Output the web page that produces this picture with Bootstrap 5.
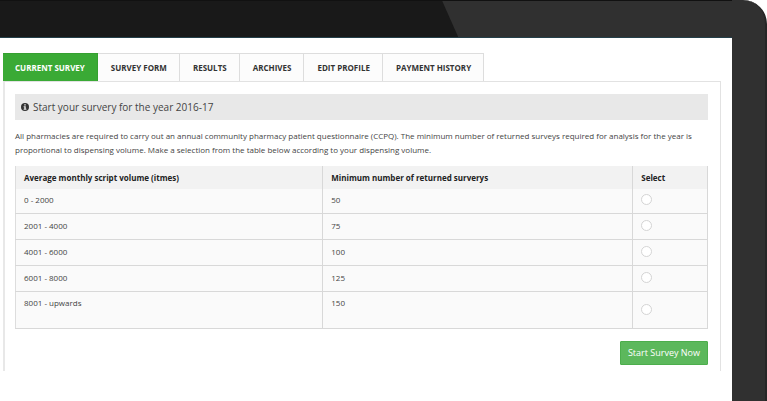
<!DOCTYPE html>
<html lang="en">
<head>
<meta charset="utf-8">
<meta name="viewport" content="width=device-width, initial-scale=1">
<title>Current Survey</title>
<link href="https://cdn.jsdelivr.net/npm/bootstrap@5.3.0/dist/css/bootstrap.min.css" rel="stylesheet">
<style>
body { font-family: "Open Sans", "Noto Sans", sans-serif; font-size: 8px; line-height: 14px; color: #444; background: #fff; }
.device { background: #303030; border-top-right-radius: 24px; border-right: 2px solid #262626; padding-right: 33px; overflow: hidden; }
.bezel { height: 38px; border-top: 1px solid #111; border-bottom: 1px solid #24404a; }
.bezel-shade { width: 62.6%; background: #191919; clip-path: polygon(0 0, calc(100% - 16px) 0, 100% 100%, 0 100%); }
.screen { padding: 15px 11px 32px 3px; }
.survey-tabs { --bs-nav-tabs-border-width: 1px; border-bottom: 0; }
.survey-tabs .nav-link { font-size: 8px; line-height: 14px; font-weight: 700; color: #333; background: #fcfcfc; border: 1px solid #ddd; border-width: 1px 1px 0 0; border-radius: 0; padding: 7px 12px 6px 13px; margin: 0; }
.survey-tabs .nav-link.active { color: #fff; background: #3aaa35; border-color: #35a030; padding-left: 12px; }
.panel { border: 1px solid #e2e2e2; border-left: 2px solid #e8e8e8; border-bottom: 0; padding: 12px 12px 6px 10px; }
.banner { background: #e8e8e8; font-size: 10px; line-height: 16px; padding: 5px 6px; margin-bottom: 9px; }
.intro { margin-bottom: 9px; }
.survey-table { --bs-table-bg: #fafafa; --bs-table-color: #444; border: 1px solid #ddd; border-top: 0; table-layout: fixed; margin-bottom: 12px; }
.survey-table th, .survey-table td { border: 1px solid #d8d8d8; border-width: 0 1px 1px 0; padding: 5px 8px 6px; height: 26px; line-height: 14px; }
.survey-table th { background: #f2f2f2; color: #222; border-bottom: 0; height: 23px; padding: 5px 8px 4px; }
.survey-table tbody tr:first-child td { height: 24px; padding-top: 4px; padding-bottom: 5px; }
.survey-table tbody tr:last-child td { height: 37px; padding-top: 4px; }
.survey-table tbody tr:last-child td:last-child { vertical-align: middle; }
.range-col { width: 44.4%; }
.number-col { width: 44.8%; }
.survey-table .form-check-input { display: block; width: 11px; height: 11px; margin: 1px 0 0; border: 1px solid #d4d4d4; }
.start-btn { --bs-btn-bg: #5cb85c; --bs-btn-border-color: #4cae4c; --bs-btn-color: #fff; --bs-btn-hover-bg: #449d44; --bs-btn-hover-color: #fff; font-size: 9px; line-height: 14px; padding: 4px 7px; border-radius: 1px; }
</style>
<script src="https://cdn.jsdelivr.net/npm/bootstrap@5.3.0/dist/js/bootstrap.bundle.min.js"></script>
</head>
<body>
<div class="device">
  <div class="bezel d-flex"><div class="bezel-shade"></div></div>
  <main class="screen bg-white">
    <nav aria-label="Survey sections">
      <div class="survey-tabs nav nav-tabs text-uppercase">
        <a class="nav-link active" aria-current="page" href="#">Current Survey</a>
        <a class="nav-link" href="#">Survey Form</a>
        <a class="nav-link" href="#">Results</a>
        <a class="nav-link" href="#">Archives</a>
        <a class="nav-link" href="#">Edit Profile</a>
        <a class="nav-link" href="#">Payment History</a>
      </div>
    </nav>
    <form class="panel">
      <h1 class="banner d-flex align-items-center fw-normal">
        <svg class="me-1 flex-shrink-0" width="8" height="8" viewBox="0 0 16 16" aria-hidden="true"><circle cx="8" cy="8" r="8" fill="#333"/><path d="M6.5 2.5h3v2.3h-3zM5.3 6.3h4.2v5h1.3v2H5.3v-2h1.3v-3H5.3z" fill="#e8e8e8"/></svg>
        <span>Start your survery for the year 2016-17</span>
      </h1>
      <p class="intro">All pharmacies are required to carry out an annual community pharmacy patient questionnaire (CCPQ). The minimum number of returned surveys required for analysis for the year is proportional to dispensing volume. Make a selection from the table below according to your dispensing volume.</p>
      <table class="survey-table table">
        <thead>
          <tr><th class="range-col" scope="col">Average monthly script volume (itmes)</th><th class="number-col" scope="col">Minimum number of returned surverys</th><th scope="col">Select</th></tr>
        </thead>
        <tbody>
          <tr><td><label for="r1">0 - 2000</label></td><td>50</td><td><input class="form-check-input" type="radio" name="volume" id="r1"></td></tr>
          <tr><td><label for="r2">2001 - 4000</label></td><td>75</td><td><input class="form-check-input" type="radio" name="volume" id="r2"></td></tr>
          <tr><td><label for="r3">4001 - 6000</label></td><td>100</td><td><input class="form-check-input" type="radio" name="volume" id="r3"></td></tr>
          <tr><td><label for="r4">6001 - 8000</label></td><td>125</td><td><input class="form-check-input" type="radio" name="volume" id="r4"></td></tr>
          <tr><td><label for="r5">8001 - upwards</label></td><td>150</td><td><input class="form-check-input" type="radio" name="volume" id="r5"></td></tr>
        </tbody>
      </table>
      <div class="d-flex justify-content-end"><button type="submit" class="start-btn btn">Start Survey Now</button></div>
    </form>
  </main>
</div>
</body>
</html>
